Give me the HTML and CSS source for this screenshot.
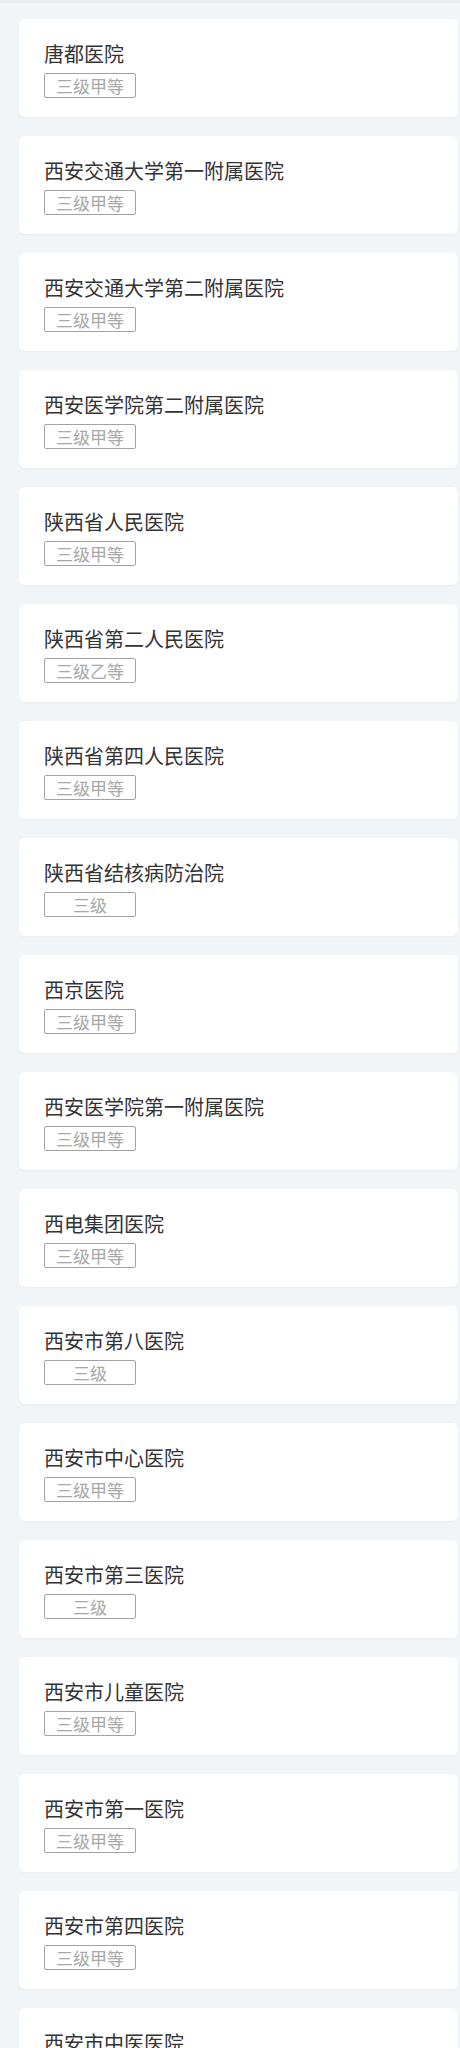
FILE: index.html
```html
<!DOCTYPE html>
<html lang="zh-CN">
<head>
<meta charset="utf-8">
<title>医院列表</title>
<link rel="stylesheet" href="styles.css">
</head>
<body>
<div class="topbar"></div>
<ul class="list">
  <li class="card"><div class="name">唐都医院</div><span class="tag">三级甲等</span></li>
  <li class="card"><div class="name">西安交通大学第一附属医院</div><span class="tag">三级甲等</span></li>
  <li class="card"><div class="name">西安交通大学第二附属医院</div><span class="tag">三级甲等</span></li>
  <li class="card"><div class="name">西安医学院第二附属医院</div><span class="tag">三级甲等</span></li>
  <li class="card"><div class="name">陕西省人民医院</div><span class="tag">三级甲等</span></li>
  <li class="card"><div class="name">陕西省第二人民医院</div><span class="tag">三级乙等</span></li>
  <li class="card"><div class="name">陕西省第四人民医院</div><span class="tag">三级甲等</span></li>
  <li class="card"><div class="name">陕西省结核病防治院</div><span class="tag">三级</span></li>
  <li class="card"><div class="name">西京医院</div><span class="tag">三级甲等</span></li>
  <li class="card"><div class="name">西安医学院第一附属医院</div><span class="tag">三级甲等</span></li>
  <li class="card"><div class="name">西电集团医院</div><span class="tag">三级甲等</span></li>
  <li class="card"><div class="name">西安市第八医院</div><span class="tag">三级</span></li>
  <li class="card"><div class="name">西安市中心医院</div><span class="tag">三级甲等</span></li>
  <li class="card"><div class="name">西安市第三医院</div><span class="tag">三级</span></li>
  <li class="card"><div class="name">西安市儿童医院</div><span class="tag">三级甲等</span></li>
  <li class="card"><div class="name">西安市第一医院</div><span class="tag">三级甲等</span></li>
  <li class="card"><div class="name">西安市第四医院</div><span class="tag">三级甲等</span></li>
  <li class="card"><div class="name">西安市中医医院</div><span class="tag">三级甲等</span></li>
</ul>
</body>
</html>
```
FILE: styles.css
```css
html, body {
  margin: 0;
  padding: 0;
  background: #f1f5f8;
}
body {
  font-family: "Noto Sans CJK SC", "Noto Sans", sans-serif;
}
.topbar {
  height: 3px;
  background: #e7ecf0;
}
.list {
  list-style: none;
  margin: 0;
  padding: 16px 2px 40px 19px;
  display: flex;
  flex-direction: column;
  gap: 19px;
}
.card {
  background: #ffffff;
  border-radius: 6px;
  box-shadow: 0 1px 3px rgba(0, 0, 0, 0.04);
  padding: 21px 25px 19px 25px;
  height: 98px;
  box-sizing: border-box;
}
.name {
  font-size: 20px;
  line-height: 28px;
  color: #333333;
  margin-bottom: 5px;
  white-space: nowrap;
}
.tag {
  display: block;
  width: 92px;
  height: 25px;
  box-sizing: border-box;
  border: 1px solid #a3a3a3;
  border-radius: 2px;
  color: #a8a8a8;
  font-size: 17px;
  line-height: 23px;
  text-align: center;
}
```
